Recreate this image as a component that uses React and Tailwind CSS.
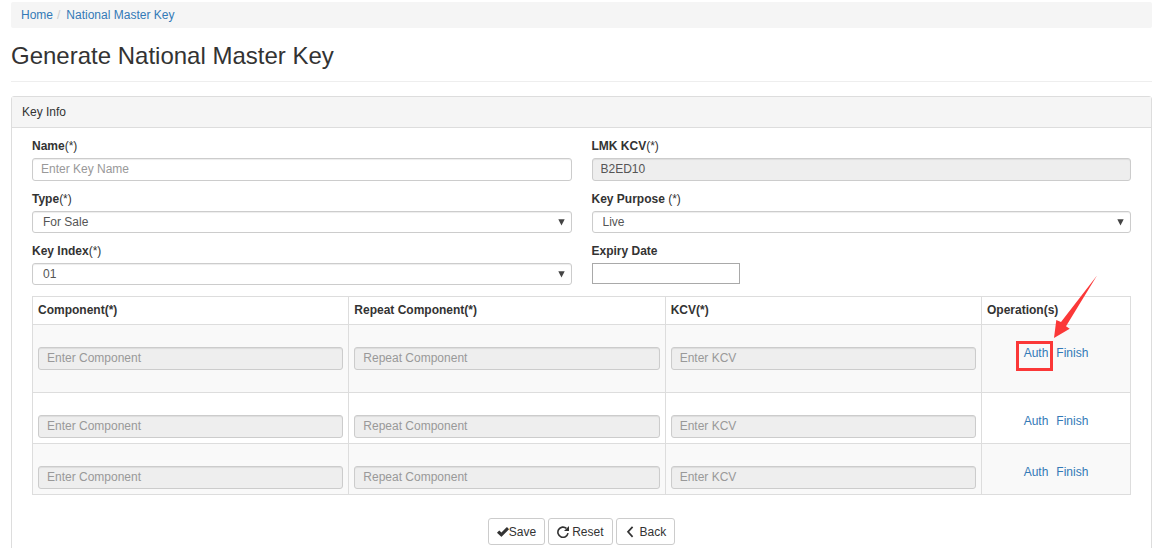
import React from 'react';

const inputBase =
  'block h-[23px] w-full rounded-[3px] border border-[#ccc] px-2 pb-0.5 text-xs text-[#555] shadow-[inset_0_1px_1px_rgba(0,0,0,0.075)] outline-none placeholder:text-[#999]';

function Label({ htmlFor, text, mark }) {
  return (
    <label htmlFor={htmlFor} className="mb-1 block h-4 leading-4">
      <span className="font-bold">{text}</span>
      {mark}
    </label>
  );
}

function SelectField({ id, text, mark, options }) {
  return (
    <div>
      <Label htmlFor={id} text={text} mark={mark} />
      <div className="relative">
        <select
          id={id}
          className="block h-[22px] w-full appearance-none rounded-[3px] border border-[#ccc] bg-white px-2.5 text-xs text-[#555] shadow-[inset_0_1px_1px_rgba(0,0,0,0.075)] outline-none"
        >
          {options.map((o) => (
            <option key={o}>{o}</option>
          ))}
        </select>
        <svg
          className="pointer-events-none absolute top-2 right-[7px] h-[7px] w-[7px] fill-[#444]"
          viewBox="0 0 7 7"
          aria-hidden="true"
        >
          <path d="M0.3 0.3H6.7L3.5 6.6Z" />
        </svg>
      </div>
    </div>
  );
}

function CheckIcon() {
  return (
    <svg className="h-3 w-3" viewBox="0 0 12 12" fill="currentColor" aria-hidden="true">
      <path d="M0.2 6.5 L2 4.7 Q2.3 4.4 2.6 4.7 L4.4 6.4 L9.6 1.3 Q9.9 1 10.2 1.3 L11.8 2.9 Q12.1 3.2 11.8 3.5 L4.8 10.5 Q4.4 10.9 4 10.5 L0.2 7.1 Q-0.1 6.8 0.2 6.5Z" />
    </svg>
  );
}

function RepeatIcon() {
  return (
    <svg className="h-3 w-3" viewBox="0 0 12 12" aria-hidden="true">
      <path
        d="M9.4 2.4 A5.1 5.1 0 1 0 11 7.2"
        fill="none"
        stroke="currentColor"
        strokeWidth="1.6"
      />
      <path d="M12 0V5H7Z" fill="currentColor" />
    </svg>
  );
}

function MenuLeftIcon() {
  return (
    <svg className="h-3 w-3" viewBox="0 0 12 12" aria-hidden="true">
      <path d="M7.6 0.8 L3 5.8 L7.6 10.8" fill="none" stroke="currentColor" strokeWidth="1.7" />
    </svg>
  );
}

function Highlight() {
  return (
    <>
      <span className="pointer-events-none absolute -top-1 -left-2 h-[30px] w-[37px] border-3 border-[#fb3838]" />
      <svg
        className="pointer-events-none absolute -top-[70px] left-[30px] h-[63px] w-[43px] max-w-none fill-[#fb3838]"
        viewBox="0 0 43 63"
        aria-hidden="true"
      >
        <path d="M43 0.5 L7 47 L2.3 45 L0 63 L15.7 53.8 L12 51.3Z" />
      </svg>
    </>
  );
}

const rows = [
  { id: 1, cell: 'pt-[22px] pb-[22px]', shade: 'bg-[#f9f9f9]', marked: true },
  { id: 2, cell: 'pt-[22px] pb-[5px]', shade: 'bg-white' },
  { id: 3, cell: 'pt-[22px] pb-[5px]', shade: 'bg-[#f9f9f9]' },
];

const fields = ['Enter Component', 'Repeat Component', 'Enter KCV'];
const headings = ['Component(*)', 'Repeat Component(*)', 'KCV(*)', 'Operation(s)'];

const button =
  'flex h-[27px] items-center rounded-[3px] border border-[#ccc] bg-white px-2 text-xs text-[#333]';

export default function App() {
  return (
    <div className="h-screen overflow-hidden bg-white pt-0.5 pr-[13px] pl-[11px] font-['Liberation_Sans',Arial,sans-serif] text-xs text-[#333]">
      <nav aria-label="Breadcrumb" className="rounded-xs bg-[#f5f5f5] px-2.5 py-1">
        <ol className="flex h-[18px] items-center">
          <li>
            <a href="#home" className="text-[#337ab7]">Home</a>
          </li>
          <li className="flex">
            <span className="pr-1.5 pl-1 text-[#ccc]">/</span>
            <a href="#key" className="text-[#337ab7]">National Master Key</a>
          </li>
        </ol>
      </nav>

      <h1 className="mt-[13px] border-b border-[#eee] pb-[11px] text-2xl leading-[29px]">
        Generate National Master Key
      </h1>

      <section className="mt-3.5 rounded-[3px] border border-[#ddd]">
        <h2 className="border-b border-[#ddd] bg-[#f5f5f5] px-2.5 py-1.5 leading-[18px]">Key Info</h2>

        <form className="px-5 pt-2.5 pb-10" onSubmit={(e) => e.preventDefault()}>
          <div className="grid grid-cols-2 gap-x-5 gap-y-2.5">
            <div>
              <Label htmlFor="name" text="Name" mark="(*)" />
              <input id="name" type="text" placeholder="Enter Key Name" className={`${inputBase} bg-white`} />
            </div>
            <div>
              <Label htmlFor="lmk" text="LMK KCV" mark="(*)" />
              <input id="lmk" type="text" defaultValue="B2ED10" disabled className={`${inputBase} bg-[#eee]`} />
            </div>
            <SelectField id="type" text="Type" mark="(*)" options={['For Sale']} />
            <SelectField id="purpose" text="Key Purpose" mark=" (*)" options={['Live']} />
            <SelectField id="index" text="Key Index" mark="(*)" options={['01']} />
            <div>
              <Label htmlFor="expiry" text="Expiry Date" />
              <input
                id="expiry"
                type="text"
                className="block h-[21px] w-[148px] border border-[#a9a9a9] bg-white px-1 outline-none"
              />
            </div>
          </div>

          <table className="mt-[11px] w-full table-fixed border-collapse">
            <thead>
              <tr>
                {headings.map((h) => (
                  <th
                    key={h}
                    scope="col"
                    className="border border-[#ddd] px-[5px] pt-1 pb-[5px] text-left leading-[18px] font-bold last:w-[149px]"
                  >
                    {h}
                  </th>
                ))}
              </tr>
            </thead>
            <tbody>
              {rows.map((row) => (
                <tr key={row.id} className={row.shade}>
                  {fields.map((f) => (
                    <td key={f} className={`border border-[#ddd] px-[5px] align-top ${row.cell}`}>
                      <input
                        type="text"
                        aria-label={`${f} ${row.id}`}
                        placeholder={f}
                        disabled
                        className={`${inputBase} bg-[#eee]`}
                      />
                    </td>
                  ))}
                  <td className="border border-[#ddd] px-[5px] pt-5 align-top">
                    <div className="flex justify-center gap-2 leading-4">
                      <span className="relative">
                        <a href="#auth" className="text-[#337ab7]">Auth</a>
                        {row.marked && <Highlight />}
                      </span>
                      <a href="#finish" className="text-[#337ab7]">Finish</a>
                    </div>
                  </td>
                </tr>
              ))}
            </tbody>
          </table>

          <div className="mt-[23px] flex justify-center gap-[3px]">
            <button type="submit" className={button}>
              <CheckIcon />
              Save
            </button>
            <button type="reset" className={`${button} gap-[3px]`}>
              <RepeatIcon />
              Reset
            </button>
            <button type="button" className={`${button} gap-[3px]`}>
              <MenuLeftIcon />
              Back
            </button>
          </div>
        </form>
      </section>
    </div>
  );
}
